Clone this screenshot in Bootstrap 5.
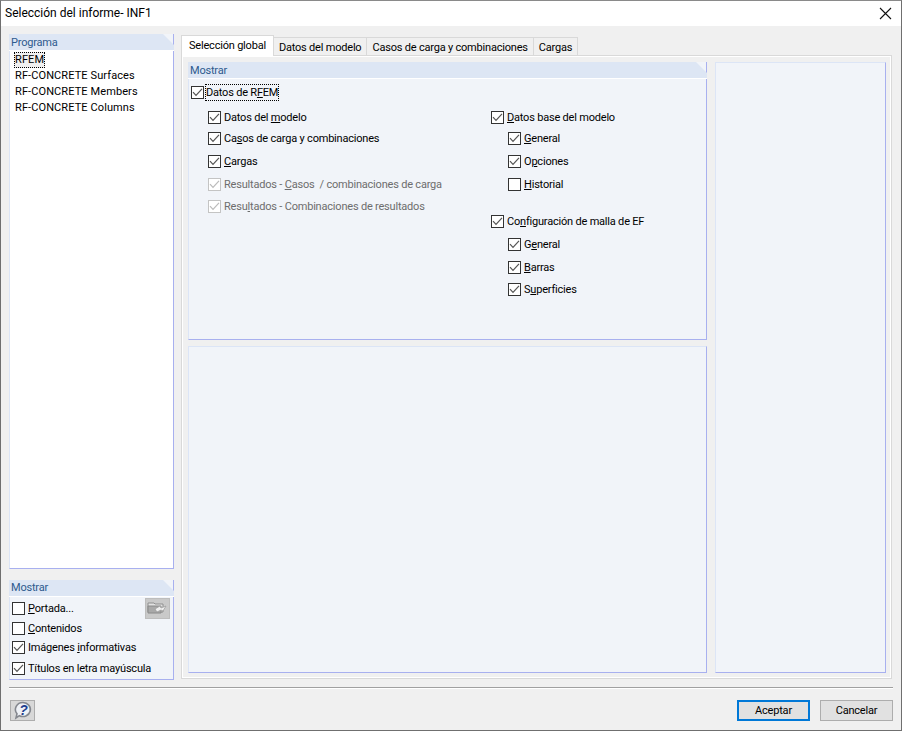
<!DOCTYPE html>
<html lang="es">
<head>
<meta charset="utf-8">
<title>Selección del informe- INF1</title>
<link href="https://cdn.jsdelivr.net/npm/bootstrap@5.3.0/dist/css/bootstrap.min.css" rel="stylesheet">
<style>
html,body{margin:0;padding:0;background:#f0f0f0}
body{font-family:Roboto,Lato,sans-serif;font-size:11px;letter-spacing:-.2px;line-height:15px;color:#000}
.dlg{width:902px;height:731px;border:1px solid #6f6f6f;border-top-color:#8a8a8a;background:#f0f0f0;overflow:hidden}
.dlg-title{height:25px;background:#fff;padding:0 8px 0 4px;font-size:12px;letter-spacing:0}
.dlg-close{width:13px;height:13px;margin-right:1px}
.dlg-main{padding:8px 8px 0 8px;height:654px}
.side{width:165px;margin-right:7px}
.pnl{background:#f1f4f9;border-left:1px solid #dce5f6;border-right:1px solid #a8b0ef;border-bottom:1px solid #a8b0ef}
.pnl-head{height:17px;margin:0 -1px;padding:1px 0 0 2px;background:#dde6f4;color:#2d5a8e;line-height:15px;clip-path:polygon(0 0,calc(100% - 11px) 0,100% 11px,100% 100%,0 100%);border-bottom:1px solid #fff}
.pnl-flat{border-top:1px solid #dce5f6;border-left:1px solid #dce5f6}
.prog{height:535px}
.prog-list{background:#fff;padding:1px 5px}
.prog-item{height:16px;line-height:15px;letter-spacing:.1px}
.prog-item.sel{display:table;outline:1px dotted #000;outline-offset:-1px;background:#f0f0f0;padding:0 1px;margin-left:-1px}
.showbox{height:100px;position:relative}
.showbox .pnl-head{padding-top:0}
.showbox .rw{padding-left:2px;height:20px}
.showbox .rw-a{margin-top:1px}
.showbox .rw-c{margin-top:-1px}
.tabzone{width:711px}
.nav-tabs.tabsx{height:21px;border:0;flex-wrap:nowrap;align-items:flex-end;padding-left:0}
.tabsx .nav-link{height:18px;padding:2px 5px 0;border:1px solid #d9d9d9;border-bottom:0;border-left:0;border-radius:0;margin:0;color:#000;background:#f0f0f0;font-size:11px;line-height:15px;white-space:nowrap}
.tabsx .nav-link.active{height:21px;margin-bottom:-1px;position:relative;z-index:2;background:#fff;border:1px solid #d9d9d9;border-bottom:0;padding:2px 7px 0 7px;color:#000}
.tabpane{height:624px;border:1px solid #d9d9d9;box-shadow:inset 1px 1px 0 #fff,inset -1px -1px 0 #fff;background:#f0f0f0;padding:6px 5px 5px 6px;gap:8px}
.midcol{width:519px;gap:6px}
.topbox{height:278px}
.botbox{height:327px}
.sidebox{width:171px}
.rw{display:flex;align-items:center;height:22px}
.rw-root{padding:3px 0 0 2px;height:24px}
.rw-root .cbx.form-check-input{margin-right:2px}
.cols{padding:3px 0 0 19px}
.col-l{width:283px}
.ind{padding-left:17px}
.mt-g1{margin-top:-1px}
.mt-g2{margin-top:1px}
.mt-g15{margin-top:15px}
.form-check-input.cbx{width:13px;height:13px;min-width:13px;margin:0 3px 0 0;border:1px solid #333;border-radius:0;background-color:#fff;box-shadow:none;opacity:1;flex:none}
.form-check-input.cbx:checked{background-color:#fff;border-color:#333;background-size:13px 13px;background-image:url("data:image/svg+xml,%3csvg xmlns='http://www.w3.org/2000/svg' viewBox='0 0 13 13'%3e%3cpath fill='none' stroke='%23555' stroke-width='1.2' d='M2 6.2l3 3.2 6-6.6'/%3e%3c/svg%3e")}
.form-check-input.cbx:disabled{border-color:#c4c4c4;background-color:#fff;opacity:1}
.form-check-input.cbx:disabled:checked{background-image:url("data:image/svg+xml,%3csvg xmlns='http://www.w3.org/2000/svg' viewBox='0 0 13 13'%3e%3cpath fill='none' stroke='%23bbb' stroke-width='1.2' d='M2 6.2l3 3.2 6-6.6'/%3e%3c/svg%3e")}
.lbl-off{color:#6d6d6d}
.focusmark{outline:1px dotted #000;outline-offset:0;height:15px;line-height:15px}
.icobtn{position:absolute;left:135px;top:18px;width:25px;height:21px;background:#c9c9c9;border:1px solid #bdbdbd;padding:0;display:flex;align-items:center;justify-content:center}
.dlg-foot{padding:7px 8px 0 8px}
.sep{height:2px;background:#a0a0a0;border-bottom:1px solid #fff;margin-bottom:11px}
.foot-row{height:21px}
.btn.wbtn{width:73px;height:21px;padding:0;border-radius:0;background:#e1e1e1;border:1px solid #adadad;color:#000;font-size:11px;letter-spacing:-.2px;line-height:18px;--bs-btn-hover-bg:#e1e1e1}
.btn.wbtn-def{border:2px solid #0078d7;margin-right:10px;line-height:17px}
.btn.helpbtn{width:25px;height:21px;padding:0;border-radius:0;background:#d8d8d8;border:1px solid #adadad;margin-left:1px;display:flex;align-items:center;justify-content:center}
u{text-underline-offset:1px;text-decoration-thickness:1px}
</style>
</head>
<body>
<div class="dlg d-flex flex-column">
  <div class="dlg-title d-flex align-items-center justify-content-between">
    <span>Selección del informe- INF1</span>
    <svg class="dlg-close" viewBox="0 0 13 13"><path d="M1 1l11 11M12 1L1 12" stroke="#111" stroke-width="1.1" fill="none"/></svg>
  </div>
  <div class="dlg-main d-flex">
    <div class="side d-flex flex-column justify-content-between">
      <div class="pnl prog d-flex flex-column">
        <div class="pnl-head">Programa</div>
        <div class="prog-list flex-grow-1">
          <div class="prog-item sel">RFEM</div>
          <div class="prog-item">RF-CONCRETE Surfaces</div>
          <div class="prog-item">RF-CONCRETE Members</div>
          <div class="prog-item">RF-CONCRETE Columns</div>
        </div>
      </div>
      <div class="pnl showbox">
        <div class="pnl-head">Mostrar</div>
        <div class="rw rw-a"><input class="form-check-input cbx" type="checkbox"><span><u>P</u>ortada...</span></div>
        <div class="rw"><input class="form-check-input cbx" type="checkbox"><span><u>C</u>ontenidos</span></div>
        <div class="rw rw-c"><input class="form-check-input cbx" type="checkbox" checked><span>Imágenes <u>i</u>nformativas</span></div>
        <div class="rw rw-a"><input class="form-check-input cbx" type="checkbox" checked><span>Títulos en letra mayúscula</span></div>
        <button class="icobtn" type="button" aria-label="Portada">
          <svg width="21" height="15" viewBox="0 0 21 15"><path d="M1 2h6l1 1h8v8H1z" fill="#e2e2e2" stroke="#8e8e8e"/><path d="M1 5h13v7H1z" fill="#a9a9a9" stroke="#8a8a8a"/><path d="M8 8l5-3 1 2 5-2-3 5-2-1-4 2z" fill="#efefef" stroke="#9a9a9a" stroke-width=".7"/></svg>
        </button>
      </div>
    </div>
    <div class="tabzone d-flex flex-column">
      <ul class="nav nav-tabs tabsx">
        <li class="nav-item"><a class="nav-link active" href="#">Selección global</a></li>
        <li class="nav-item"><a class="nav-link" href="#">Datos del modelo</a></li>
        <li class="nav-item"><a class="nav-link" href="#">Casos de carga y combinaciones</a></li>
        <li class="nav-item"><a class="nav-link" href="#">Cargas</a></li>
      </ul>
      <div class="tabpane d-flex">
        <div class="midcol d-flex flex-column">
          <div class="pnl topbox">
            <div class="pnl-head">Mostrar</div>
            <div class="rw rw-root"><input class="form-check-input cbx" type="checkbox" checked><span class="focusmark">Datos de R<u>F</u>EM</span></div>
            <div class="cols d-flex">
              <div class="col-l">
                <div class="rw"><input class="form-check-input cbx" type="checkbox" checked><span>Datos del <u>m</u>odelo</span></div>
                <div class="rw mt-g1"><input class="form-check-input cbx" type="checkbox" checked><span>Ca<u>s</u>os de carga y combinaciones</span></div>
                <div class="rw mt-g2"><input class="form-check-input cbx" type="checkbox" checked><span><u>C</u>argas</span></div>
                <div class="rw mt-g2"><input class="form-check-input cbx" type="checkbox" checked disabled><span class="lbl-off">Resultados - <u>C</u>asos &nbsp;/ combinaciones de carga</span></div>
                <div class="rw"><input class="form-check-input cbx" type="checkbox" checked disabled><span class="lbl-off">Resu<u>l</u>tados - Combinaciones de resultados</span></div>
              </div>
              <div>
                <div class="rw"><input class="form-check-input cbx" type="checkbox" checked><span><u>D</u>atos base del modelo</span></div>
                <div class="ind">
                  <div class="rw mt-g1"><input class="form-check-input cbx" type="checkbox" checked><span><u>G</u>eneral</span></div>
                  <div class="rw mt-g2"><input class="form-check-input cbx" type="checkbox" checked><span>O<u>p</u>ciones</span></div>
                  <div class="rw mt-g2"><input class="form-check-input cbx" type="checkbox"><span><u>H</u>istorial</span></div>
                </div>
                <div class="rw mt-g15"><input class="form-check-input cbx" type="checkbox" checked><span>Co<u>n</u>figuración de malla de EF</span></div>
                <div class="ind">
                  <div class="rw mt-g2"><input class="form-check-input cbx" type="checkbox" checked><span>G<u>e</u>neral</span></div>
                  <div class="rw mt-g2"><input class="form-check-input cbx" type="checkbox" checked><span><u>B</u>arras</span></div>
                  <div class="rw"><input class="form-check-input cbx" type="checkbox" checked><span>S<u>u</u>perficies</span></div>
                </div>
              </div>
            </div>
          </div>
          <div class="pnl pnl-flat botbox"></div>
        </div>
        <div class="pnl pnl-flat sidebox"></div>
      </div>
    </div>
  </div>
  <div class="dlg-foot">
    <div class="sep"></div>
    <div class="foot-row d-flex justify-content-between">
      <button class="btn helpbtn" type="button" aria-label="Ayuda">
        <svg width="20" height="19" viewBox="0 0 20 19"><path d="M10 1.5a7.5 7 0 1 1-3.6 13.2L3 17l1-4.2A7.5 7 0 0 1 10 1.5z" fill="#eef1f6" stroke="#85888f" stroke-width="1.6"/><text x="10.5" y="13.5" text-anchor="middle" font-family="Liberation Sans,sans-serif" font-weight="bold" font-style="italic" font-size="14" fill="#1f3f8f">?</text></svg>
      </button>
      <div class="d-flex">
        <button class="btn wbtn wbtn-def" type="button">Aceptar</button>
        <button class="btn wbtn" type="button">Cancelar</button>
      </div>
    </div>
  </div>
</div>
<script src="https://cdn.jsdelivr.net/npm/bootstrap@5.3.0/dist/js/bootstrap.bundle.min.js"></script>
</body>
</html>
